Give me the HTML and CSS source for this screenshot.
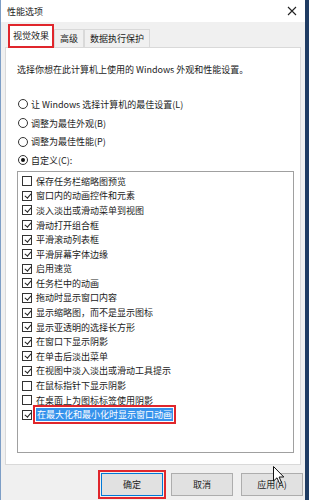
FILE: index.html
```html
<!DOCTYPE html>
<html lang="zh-CN">
<head>
    <meta charset="UTF-8">
    <meta name="viewport" content="width=device-width, initial-scale=1.0">
    <title>性能选项</title>
    <link rel="stylesheet" href="styles.css">
</head>
<body>
    <div class="window">
        <div class="titlebar">
            <span class="title">性能选项</span>
            <svg class="close" width="10" height="10" viewBox="0 0 10 10">
                <path d="M1 1 L9 9 M9 1 L1 9" stroke="#222" stroke-width="1.1" fill="none"/>
            </svg>
        </div>

        <div class="tabs">
            <div class="tab active">视觉效果</div>
            <div class="tab">高级</div>
            <div class="tab">数据执行保护</div>
        </div>

        <div class="panel">
            <p class="desc">选择你想在此计算机上使用的 Windows 外观和性能设置。</p>

            <div class="radios">
                <label class="radio-row"><span class="radio"></span>让 Windows 选择计算机的最佳设置(L)</label>
                <label class="radio-row"><span class="radio"></span>调整为最佳外观(B)</label>
                <label class="radio-row"><span class="radio"></span>调整为最佳性能(P)</label>
                <label class="radio-row"><span class="radio on"></span>自定义(C):</label>
            </div>

            <div class="listbox">
                <div class="item"><span class="cb"></span>保存任务栏缩略图预览</div>
                <div class="item"><span class="cb on"></span>窗口内的动画控件和元素</div>
                <div class="item"><span class="cb on"></span>淡入淡出或滑动菜单到视图</div>
                <div class="item"><span class="cb on"></span>滑动打开组合框</div>
                <div class="item"><span class="cb on"></span>平滑滚动列表框</div>
                <div class="item"><span class="cb on"></span>平滑屏幕字体边缘</div>
                <div class="item"><span class="cb on"></span>启用速览</div>
                <div class="item"><span class="cb on"></span>任务栏中的动画</div>
                <div class="item"><span class="cb on"></span>拖动时显示窗口内容</div>
                <div class="item"><span class="cb on"></span>显示缩略图，而不是显示图标</div>
                <div class="item"><span class="cb on"></span>显示亚透明的选择长方形</div>
                <div class="item"><span class="cb on"></span>在窗口下显示阴影</div>
                <div class="item"><span class="cb on"></span>在单击后淡出菜单</div>
                <div class="item"><span class="cb on"></span>在视图中淡入淡出或滑动工具提示</div>
                <div class="item"><span class="cb"></span>在鼠标指针下显示阴影</div>
                <div class="item"><span class="cb"></span>在桌面上为图标标签使用阴影</div>
                <div class="item"><span class="cb on"></span><span class="selected">在最大化和最小化时显示窗口动画</span></div>
            </div>
        </div>

        <div class="footer">
            <button class="btn default">确定</button>
            <button class="btn">取消</button>
            <button class="btn">应用(A)</button>
        </div>

        <!-- mouse pointer over the apply button -->
        <svg class="cursor" width="12" height="19" viewBox="0 0 12 19">
            <path d="M0.5 0.5 L0.5 15 L4 11.8 L6.5 17.5 L8.6 16.6 L6.1 11 L10.8 11 Z" fill="#fff" stroke="#111" stroke-width="1"/>
        </svg>
    </div>
</body>
</html>
```

FILE: styles.css
```css
body {
    margin: 0;
    width: 309px;
    height: 500px;
    background: #1f3c63;
    font-family: "Noto Sans CJK SC", "Noto Sans", sans-serif;
    font-size: 9px;
    color: #1a1a1a;
    overflow: hidden;
}
.window {
    position: relative;
    width: 304px;
    height: 500px;
    background: #f0f0f0;
    border-left: 1px solid #7d9ec6;
}
.titlebar {
    height: 22px;
    background: #fff;
    display: flex;
    align-items: center;
    justify-content: space-between;
    padding: 0 8px 0 6px;
}
.title {
    font-size: 9px;
    color: #222;
}
.tabs {
    display: flex;
    align-items: flex-end;
    height: 25px;
    padding-left: 7px;
}
.tab {
    height: 17px;
    line-height: 17px;
    padding: 0 5px;
    border: 1px solid #d9d9d9;
    border-bottom: none;
    background: #f0f0f0;
    margin-bottom: 0;
}
.tab.active {
    height: 20px;
    line-height: 20px;
    padding: 0 3px;
    background: #fff;
    border: 2px solid #e0262c;
    position: relative;
    z-index: 1;
    margin-bottom: -1px;
}
.panel {
    margin: 0 4px 0 4px;
    height: 416px;
    background: #fff;
    border: 1px solid #d9d9d9;
    padding: 0 11px;
}
.desc {
    margin: 16px 0 0;
    line-height: 12px;
}
.radios {
    margin-top: 19px;
}
.radio-row {
    display: flex;
    align-items: center;
    height: 18.7px;
    gap: 3px;
    padding-left: 1px;
}
.radio {
    width: 8px;
    height: 8px;
    border: 1px solid #333;
    border-radius: 50%;
    display: flex;
    align-items: center;
    justify-content: center;
}
.radio.on::after {
    content: "";
    width: 4px;
    height: 4px;
    border-radius: 50%;
    background: #111;
}
.listbox {
    margin-top: 1.5px;
    width: 271px;
    height: 278px;
    border: 1px solid #a0a0a0;
    padding-top: 1.7px;
    padding-left: 4px;
    box-sizing: content-box;
}
.item {
    display: flex;
    align-items: center;
    height: 14.6px;
    gap: 4px;
    white-space: nowrap;
}
.cb {
    width: 8px;
    height: 8px;
    border: 1px solid #333;
    position: relative;
    flex: none;
}
.cb.on::after {
    content: "";
    position: absolute;
    left: 2.5px;
    top: 0px;
    width: 2.5px;
    height: 5px;
    border-right: 1.2px solid #222;
    border-bottom: 1.2px solid #222;
    transform: rotate(40deg);
}
.selected {
    background: #3592ec;
    color: #fff;
    padding: 0 1px;
    outline: 2px solid #e0262c;
    outline-offset: 1px;
}
.footer {
    display: flex;
    justify-content: flex-end;
    gap: 8px;
    margin-top: 8px;
    padding-right: 2px;
}
.btn {
    width: 62px;
    height: 23px;
    font-family: inherit;
    font-size: 9px;
    color: #222;
    background: #e1e1e1;
    border: 1px solid #adadad;
    padding: 0;
}
.btn.default {
    border: 1px solid #0078d7;
    outline: 2px solid #e0262c;
    outline-offset: 1px;
}
.cursor {
    position: absolute;
    left: 272px;
    top: 466px;
}
```
